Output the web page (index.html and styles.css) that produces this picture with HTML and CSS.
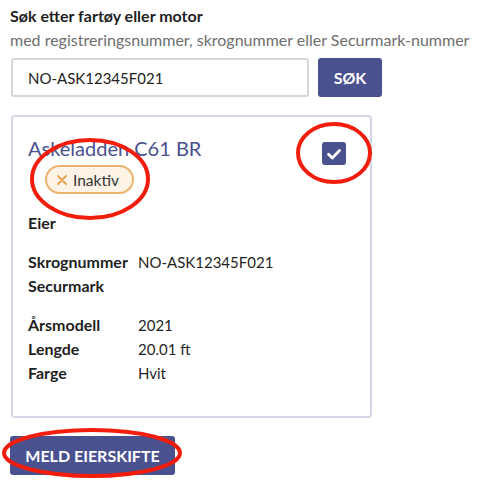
FILE: index.html
```html
<!DOCTYPE html>
<html lang="no">
<head>
<meta charset="utf-8">
<link rel="stylesheet" href="styles.css">
</head>
<body>
<div class="page">
  <h1 class="heading">Søk etter fartøy eller motor</h1>
  <p class="hint">med registreringsnummer, skrognummer eller Securmark-nummer</p>
  <form class="search">
    <input class="search-input" type="text" value="NO-ASK12345F021">
    <button class="btn btn-search" type="button">SØK</button>
  </form>

  <div class="card">
    <div class="card-head">
      <div class="card-titles">
        <h2 class="vessel">Askeladden C61 BR</h2>
        <span class="badge"><svg class="badge-x" viewBox="0 0 10 10" width="10" height="10"><path d="M1 1 L9 9 M9 1 L1 9" stroke="#e8a352" stroke-width="1.8" stroke-linecap="round"/></svg>Inaktiv</span>
      </div>
      <span class="check"><svg viewBox="0 0 24 24" width="24" height="24"><path d="M6.5 12.3 L10.3 16 L17.5 8.6" fill="none" stroke="#fff" stroke-width="2.8" stroke-linecap="round" stroke-linejoin="round"/></svg></span>
    </div>

    <div class="rows owner">
      <span class="label">Eier</span><span class="value"></span>
    </div>
    <div class="rows">
      <span class="label">Skrognummer</span><span class="value">NO-ASK12345F021</span>
      <span class="label">Securmark</span><span class="value"></span>
    </div>
    <div class="rows">
      <span class="label">Årsmodell</span><span class="value">2021</span>
      <span class="label">Lengde</span><span class="value">20.01 ft</span>
      <span class="label">Farge</span><span class="value">Hvit</span>
    </div>
  </div>

  <button class="btn btn-main" type="button">MELD EIERSKIFTE</button>
</div>

<svg class="marks" width="492" height="480" viewBox="0 0 492 480">
  <ellipse cx="90" cy="179" rx="58" ry="39" fill="none" stroke="#f21d0b" stroke-width="4"/>
  <ellipse cx="334" cy="153" rx="36" ry="29" fill="none" stroke="#f21d0b" stroke-width="4"/>
  <ellipse cx="92" cy="453" rx="88" ry="23" fill="none" stroke="#f21d0b" stroke-width="4"/>
</svg>
</body>
</html>
```

FILE: styles.css
```css
* { box-sizing: border-box; }
html, body { margin: 0; padding: 0; background: #fff; }
body {
  font-family: Lato, "Open Sans", Arial, sans-serif;
  color: #222;
  position: relative;
  width: 492px;
  height: 480px;
  overflow: hidden;
}
.page {
  padding: 5px 10px 0 10px;
  display: flex;
  flex-direction: column;
  align-items: flex-start;
}
.heading {
  margin: 0;
  font-size: 16px;
  font-weight: 700;
  line-height: 22px;
  color: #1f1f1f;
}
.hint {
  margin: 2px 0 0;
  font-size: 16px;
  line-height: 22px;
  color: #6e6e6e;
}
.search {
  margin: 7px 0 0 1px;
  display: flex;
  gap: 9px;
}
.search-input {
  width: 298px;
  height: 39px;
  border: 2px solid #d6d6d6;
  border-radius: 3px;
  padding: 0 0 0 15px;
  font-family: inherit;
  font-size: 15px;
  color: #222;
  outline: none;
}
.btn {
  border: none;
  border-radius: 3px;
  background: #4a518f;
  color: #fff;
  font-family: inherit;
  font-weight: 700;
  font-size: 16px;
  height: 39px;
  cursor: pointer;
}
.btn-search { width: 64px; padding: 0; }
.card {
  margin: 18px 0 0 1px;
  width: 361px;
  height: 303px;
  border: 2px solid #d3d5e6;
  border-radius: 4px;
  padding: 19px 15px 0 15px;
}
.card-head {
  display: flex;
  justify-content: space-between;
  align-items: flex-start;
}
.card-titles {
  display: flex;
  flex-direction: column;
  align-items: flex-start;
}
.vessel {
  margin: 0;
  font-size: 20px;
  font-weight: 400;
  line-height: 24px;
  color: #4a518f;
}
.badge {
  margin: 5px 0 0 17px;
  height: 29px;
  padding: 0 13px 0 10px;
  border: 2px solid #ebb46e;
  border-radius: 15px;
  background: #fdf3e6;
  display: inline-flex;
  align-items: center;
  gap: 6px;
  font-size: 15.5px;
  color: #333;
}
.check {
  margin: 6px 9px 0 0;
  width: 24px;
  height: 23px;
  border-radius: 3px;
  background: #4a518f;
  display: flex;
  align-items: center;
  justify-content: center;
}
.rows {
  display: grid;
  grid-template-columns: 110px 1fr;
  row-gap: 4px;
  font-size: 16px;
  line-height: 20px;
  margin-top: 19px;
}
.owner { margin-top: 19px; }
.label { font-weight: 700; color: #1f1f1f; }
.value { color: #1f1f1f; font-size: 15px; }
.btn-main {
  margin-top: 18px;
  width: 165px;
  height: 39px;
  padding: 0;
}
.marks {
  position: absolute;
  left: 0;
  top: 0;
  pointer-events: none;
}
```
